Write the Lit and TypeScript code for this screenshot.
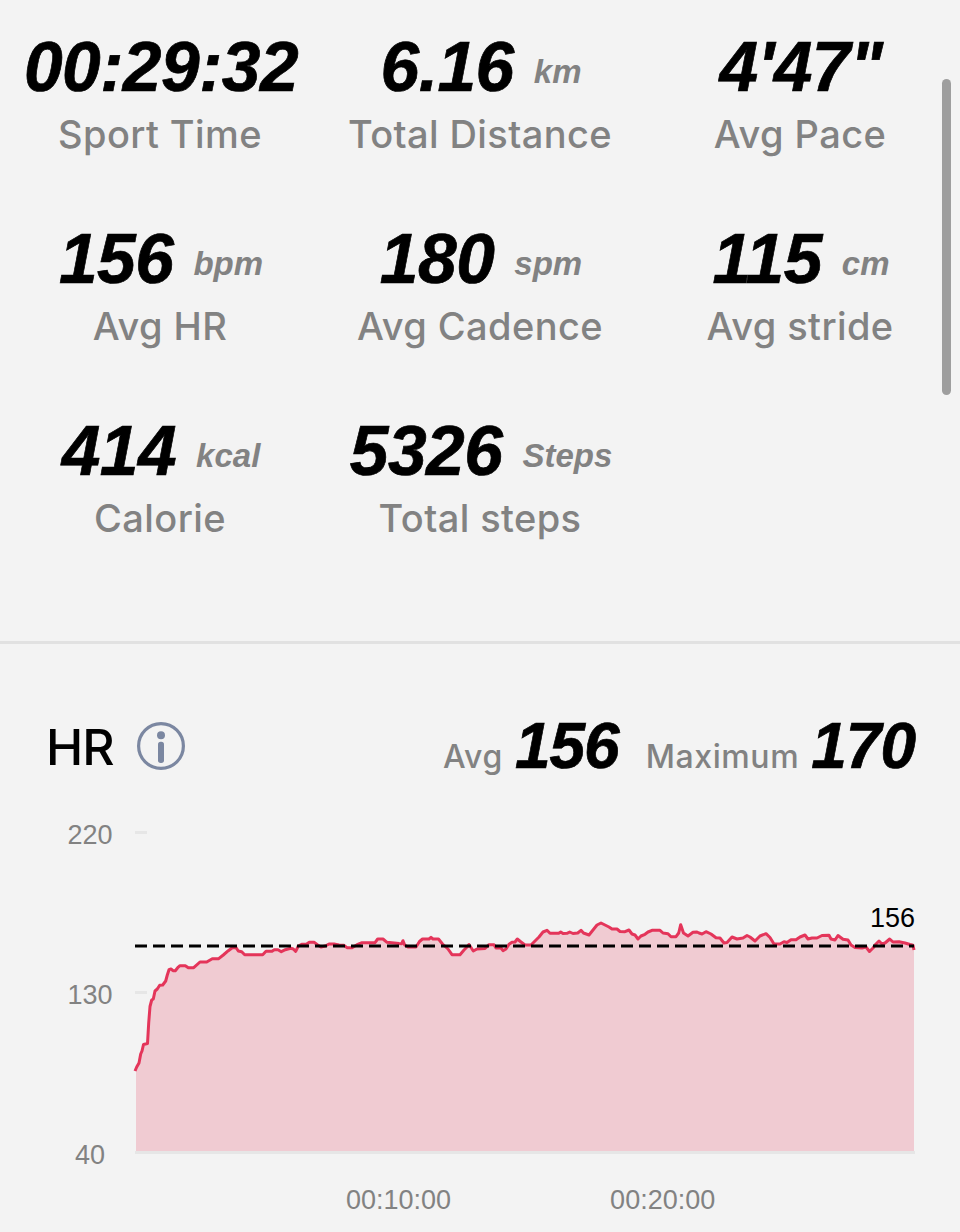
import { LitElement, html, svg, css, nothing } from "lit";
import { customElement, property } from "lit/decorators.js";

interface Stat {
  value: string;
  unit?: string;
  label: string;
}

const STATS: Stat[] = [
  { value: "00:29:32", label: "Sport Time" },
  { value: "6.16", unit: "km", label: "Total Distance" },
  { value: "4'47\"", label: "Avg Pace" },
  { value: "156", unit: "bpm", label: "Avg HR" },
  { value: "180", unit: "spm", label: "Avg Cadence" },
  { value: "115", unit: "cm", label: "Avg stride" },
  { value: "414", unit: "kcal", label: "Calorie" },
  { value: "5326", unit: "Steps", label: "Total steps" },
];

// Heart rate curve: x along the 780px axis, y down from the 220 bpm mark
const HR_POINTS: [number, number][] = [
  [0, 239], [1.7, 235], [4, 231], [5.7, 222], [7, 219], [8.5, 212.5], [12.5, 211.5],
  [13.7, 191], [15, 174.5], [16.7, 168], [18.3, 167], [20, 159], [22.3, 157],
  [24.7, 153.3], [27.7, 153], [30.7, 149], [32.3, 143], [34, 137.7], [36, 137],
  [38, 138.7], [40.3, 138.7], [42.7, 135.7], [45, 133.7], [50.3, 133.7], [53.3, 135.7],
  [58.7, 135.7], [65, 130], [71.7, 130], [77.3, 126.7], [83.7, 126.7], [88.3, 123],
  [93.3, 118.7], [97.3, 115.7], [101, 115.7], [103.3, 119], [106.7, 119.7],
  [109.7, 122.7], [127.7, 122.7], [131, 119.3], [137, 119.3], [139.3, 117.7],
  [143, 117.7], [146.3, 119.7], [150.3, 117.7], [155.7, 116.3], [158.3, 117],
  [160.7, 119.3], [163.3, 114], [166.7, 112.3], [171.7, 112], [174.3, 110.3],
  [179.3, 110.3], [182.7, 113], [186, 115], [190.3, 114], [194, 112], [199, 112],
  [204, 113], [209, 113.3], [212, 115.7], [217, 115.7], [222, 112.7], [227, 110.7],
  [240, 110.7], [242.7, 107], [248, 107], [252, 110.3], [264, 111.5], [266.7, 111.7],
  [268, 108.7], [269.7, 113], [273, 115], [281, 115], [284.5, 109.5], [287.5, 107],
  [294, 107], [296, 105.3], [298, 107], [303.5, 107], [307.5, 112], [313, 117],
  [317, 122.7], [325, 122.7], [329, 118], [332, 115], [334, 112.5], [338.3, 119],
  [342, 117], [350, 116.5], [354, 112.7], [359, 112.7], [361, 116], [366, 116],
  [368, 118.7], [371, 117], [374, 112.3], [377, 110.3], [380, 110], [382.3, 107],
  [386, 110], [390, 113], [396, 113], [399, 110], [404, 105], [408, 100],
  [412, 98.3], [415, 101.3], [423.7, 101.3], [425.7, 100], [428, 101.5],
  [432, 101.3], [434.7, 100], [438, 101.5], [442.7, 101], [446, 98.3], [448.5, 101],
  [454, 103], [458, 98], [462, 93], [466, 91], [470, 93], [474, 95], [477, 97],
  [482, 97], [485, 99.5], [490, 99.7], [494, 98], [497, 102], [500, 103],
  [503, 107], [506, 104], [510, 102.3], [513, 100], [517, 98.3], [525, 98.3],
  [528, 101], [533, 101.7], [536, 104.7], [541, 104.7], [543.7, 101],
  [545.7, 92.7], [548.5, 101], [553, 104], [558, 100.3], [562, 100],
  [564, 101], [567, 102], [571, 99.7], [576, 102], [581, 105.7], [585, 106],
  [589, 111], [592, 110.5], [597, 105], [602, 107], [608, 106], [612, 103.5],
  [615, 105], [620, 109], [625, 104], [631, 101.7], [635, 105.5], [639, 112],
  [645, 112], [649, 109.7], [652, 110.5], [656, 107.7], [661, 107.7], [665, 105],
  [670, 103], [673, 107], [677, 106], [682, 106], [687, 103.5], [694, 103.3],
  [696, 107], [700, 108], [703, 103.5], [708, 107.3], [713, 108], [716, 113],
  [720, 115.5], [727, 116], [731, 115], [734.5, 119.5], [738, 116], [741, 112],
  [744, 109], [747, 112], [750, 111], [754.7, 107], [758, 110], [764, 109.7],
  [770, 111], [775, 112.5], [778, 113.3], [779, 118],
];

@customElement("stat-item")
export class StatItem extends LitElement {
  @property() value = "";
  @property() unit = "";
  @property() label = "";

  static styles = css`
    :host {
      display: block;
      text-align: center;
      white-space: nowrap;
    }

    .value {
      height: 80px;
      padding-left: 2px;
      font: italic bold 69.5px/80px "Liberation Sans", Arial, sans-serif;
      letter-spacing: -0.5px;
      -webkit-text-stroke: 0.7px #000;
      color: #000;
    }

    .unit {
      margin-left: 20px;
      font-size: 33px;
      line-height: 33px;
      letter-spacing: 0;
      -webkit-text-stroke: 0;
      vertical-align: 8px;
      color: #828282;
    }

    .label {
      margin-top: 3px;
      font: 450 38px/48px Inter, sans-serif;
      letter-spacing: 0.4px;
      color: #828282;
    }
  `;

  render() {
    return html`
      <div class="value">${this.value}${this.unit ? html`<span class="unit">${this.unit}</span>` : nothing}</div>
      <div class="label">${this.label}</div>
    `;
  }
}

@customElement("hr-chart")
export class HrChart extends LitElement {
  static styles = css`
    :host {
      display: grid;
      grid-template-columns: 90px 780px;
      color: #828282;
      font: 27px/32px "Liberation Sans", Arial, sans-serif;
    }

    .scale {
      display: flex;
      flex-direction: column;
      justify-content: space-between;
      height: 352px;
      width: 90px;
      margin-top: 2px;
      text-align: center;
    }

    .plot {
      display: block;
      overflow: visible;
      margin-top: 15px;
    }

    .times {
      grid-column: 2;
      display: flex;
      gap: 159px;
      padding: 13px 0 0 211px;
    }

    .area {
      fill: #f0cbd2;
    }

    .line {
      fill: none;
      stroke: #e4355a;
      stroke-width: 3;
      stroke-linejoin: round;
    }

    .tick {
      stroke: #e6e6e6;
      stroke-width: 3;
    }

    .average {
      stroke: #000;
      stroke-width: 3;
      stroke-dasharray: 12 6;
    }

    .average-label {
      fill: #000;
      text-anchor: end;
    }
  `;

  render() {
    const line = HR_POINTS.map((p) => p.join(",")).join(" ");
    return html`
      <div class="scale">
        <span>220</span>
        <span>130</span>
        <span>40</span>
      </div>
      <svg class="plot" width="780" height="322" viewBox="0 0 780 322">
        ${[0, 160].map((y) => svg`<line class="tick" x1="0" x2="12" y1=${y + 0.5} y2=${y + 0.5} />`)}
        <polygon class="area" points="1,319 1,239 ${line} 779,319" />
        <line class="tick" x1="0" x2="780" y1="320.5" y2="320.5" />
        <polyline class="line" points=${line} />
        <line class="average" x1="0" x2="779" y1="114" y2="114" />
        <text class="average-label" x="780" y="95">156</text>
      </svg>
      <div class="times">
        <span>00:10:00</span>
        <span>00:20:00</span>
      </div>
    `;
  }
}

@customElement("app-root")
export class AppRoot extends LitElement {
  static styles = css`
    :host {
      display: block;
      position: relative;
      box-sizing: border-box;
      width: 960px;
      height: 1232px;
      overflow: hidden;
      background: #f3f3f3;
    }

    .stats {
      display: grid;
      grid-template-columns: repeat(3, 320px);
      row-gap: 61px;
      padding: 27px 0 99px;
      border-bottom: 3px solid #e1e1e1;
    }

    .heading {
      display: flex;
      align-items: baseline;
      padding: 62px 45px 0 46px;
      height: 96px;
      white-space: nowrap;
    }

    .title {
      align-self: flex-start;
      margin-top: 11px;
      font: 500 50px/60px Inter, sans-serif;
      letter-spacing: -1px;
      color: #000;
    }

    .info {
      align-self: flex-start;
      margin: 15px auto 0 22px;
    }

    .caption {
      font: 450 32px/40px Inter, sans-serif;
      letter-spacing: 0.6px;
      color: #828282;
    }

    .figure {
      margin-left: 12px;
      font: italic bold 64px/80px "Liberation Sans", Arial, sans-serif;
      letter-spacing: -1px;
      -webkit-text-stroke: 0.7px #000;
      color: #000;
    }

    .figure + .caption {
      margin-left: 27px;
    }

    .chart {
      margin: 15px 0 0 45px;
    }

    .scrollbar {
      position: absolute;
      top: 79px;
      right: 9px;
      width: 9px;
      height: 316px;
      border-radius: 5px;
      background: #9e9e9e;
    }
  `;

  render() {
    return html`
      <section class="stats">
        ${STATS.map((s) => html`<stat-item .value=${s.value} .unit=${s.unit ?? ""} .label=${s.label}></stat-item>`)}
      </section>
      <section>
        <div class="heading">
          <span class="title">HR</span>
          <svg class="info" width="50" height="50" viewBox="0 0 50 50">
            <circle cx="25" cy="25" r="22.4" fill="none" stroke="#7b87a1" stroke-width="3.2" />
            <circle cx="25" cy="14.3" r="4" fill="#7b87a1" />
            <rect x="22" y="20.7" width="6" height="21.3" rx="2.7" fill="#7b87a1" />
          </svg>
          <span class="caption">Avg</span>
          <span class="figure">156</span>
          <span class="caption">Maximum</span>
          <span class="figure">170</span>
        </div>
        <hr-chart class="chart"></hr-chart>
      </section>
      <div class="scrollbar"></div>
    `;
  }
}
